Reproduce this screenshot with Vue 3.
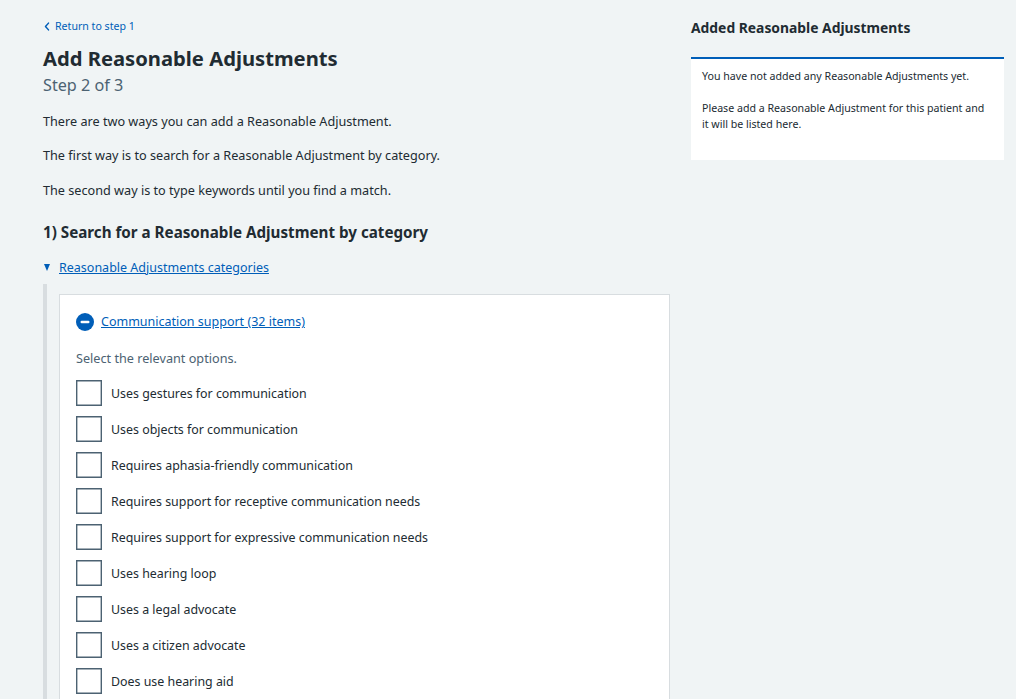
<template>
  <div class="page">
    <main class="main-col">
      <a class="back-link" href="#">
        <svg class="back-icon" viewBox="0 0 8 12" fill="none">
          <path d="M6 1.5 2 6l4 4.5" stroke="currentColor" stroke-width="2" stroke-linecap="round" stroke-linejoin="round"/>
        </svg>
        Return to step 1
      </a>
      <h1 class="title">Add Reasonable Adjustments</h1>
      <div class="step">Step 2 of 3</div>
      <p class="intro">There are two ways you can add a Reasonable Adjustment.</p>
      <p class="intro">The first way is to search for a Reasonable Adjustment by category.</p>
      <p class="intro">The second way is to type keywords until you find a match.</p>
      <h2 class="section-title">1) Search for a Reasonable Adjustment by category</h2>

      <div class="summary">
        <span class="arrow"></span>
        <a href="#">Reasonable Adjustments categories</a>
      </div>
      <div class="details-body">
        <div class="card">
          <div class="card-head">
            <svg class="minus-icon" viewBox="0 0 18 18">
              <circle cx="9" cy="9" r="9" fill="#005eb8"/>
              <rect x="4.5" y="7.8" width="9" height="2.4" rx="1.2" fill="#fff"/>
            </svg>
            <a href="#">Communication support (32 items)</a>
          </div>
          <div class="hint">Select the relevant options.</div>
          <label v-for="item in items" :key="item" class="option">
            <span class="box"></span>
            <span class="option-text">{{ item }}</span>
          </label>
        </div>
      </div>
    </main>

    <aside class="side-col">
      <h3 class="side-title">Added Reasonable Adjustments</h3>
      <div class="side-card">
        <p>You have not added any Reasonable Adjustments yet.</p>
        <p>Please add a Reasonable Adjustment for this patient and it will be listed here.</p>
      </div>
    </aside>
  </div>
</template>

<script setup>
const items = [
  'Uses gestures for communication',
  'Uses objects for communication',
  'Requires aphasia-friendly communication',
  'Requires support for receptive communication needs',
  'Requires support for expressive communication needs',
  'Uses hearing loop',
  'Uses a legal advocate',
  'Uses a citizen advocate',
  'Does use hearing aid'
];
</script>

<style>
html, body {
  margin: 0;
  height: 699px;
  overflow: hidden;
  background: #f0f4f5;
}
</style>

<style scoped>
.page {
  display: flex;
  gap: 21px;
  padding: 0 12px 0 43px;
  font-family: "Noto Sans", "Open Sans", sans-serif;
  font-size: 12.67px;
  color: #212b32;
  background: #f0f4f5;
}

a {
  color: #005eb8;
}

.main-col {
  width: 627px;
  flex-shrink: 0;
}

.back-link {
  display: flex;
  align-items: center;
  gap: 5px;
  padding-top: 17px;
  height: 18px;
  font-size: 10.6px;
  line-height: 18px;
  text-decoration: none;
}

.back-icon {
  width: 6px;
  height: 9px;
  margin-left: 1px;
}

.title {
  margin: 8px 0 0;
  font-size: 20.2px;
  line-height: 30px;
  font-weight: 700;
}

.step {
  font-size: 16.2px;
  line-height: 24px;
  color: #4c6272;
  margin-bottom: 15px;
}

.intro {
  margin: 0 0 16.4px;
  line-height: 18px;
}

.section-title {
  margin: 20.8px 0 0;
  font-size: 15.2px;
  line-height: 24px;
  font-weight: 700;
}

.summary {
  display: flex;
  align-items: center;
  gap: 9px;
  margin-top: 12px;
  height: 24px;
  font-size: 12.5px;
}

.arrow {
  width: 0;
  height: 0;
  border-left: 3.5px solid transparent;
  border-right: 3.5px solid transparent;
  border-top: 7px solid #005eb8;
  margin-left: 1px;
}

.details-body {
  margin-top: 4px;
  border-left: 4px solid #d8dde0;
  padding: 10px 0 0 12px;
}

.card {
  background: #fff;
  border: 1px solid #d8dde0;
  padding: 15px 16px 40px;
}

.card-head {
  display: flex;
  align-items: center;
  gap: 7px;
  height: 24px;
  font-size: 12.5px;
}

.minus-icon {
  width: 18px;
  height: 18px;
}

.hint {
  margin-top: 15px;
  line-height: 18px;
  color: #4c6272;
}

.option {
  display: flex;
  align-items: center;
  gap: 9px;
  height: 26px;
  margin-top: 10px;
  font-size: 12.4px;
}

.hint + .option {
  margin-top: 13px;
}

.option-text {
  padding-top: 2px;
}

.box {
  box-sizing: border-box;
  width: 26px;
  height: 26px;
  box-shadow: inset 0 0 0 1.4px #4c6272;
  flex-shrink: 0;
  background: #fff;
}

.side-col {
  width: 313px;
}

.side-title {
  margin: 18px 0 0;
  font-size: 13.87px;
  line-height: 20px;
  font-weight: 700;
}

.side-card {
  margin-top: 19px;
  background: #fff;
  border-top: 2px solid #005eb8;
  padding: 9px 11px 28px;
  font-size: 10.64px;
  line-height: 16px;
}

.side-card p {
  margin: 0 0 16px;
}

.side-card p:last-child {
  margin-bottom: 0;
}
</style>
